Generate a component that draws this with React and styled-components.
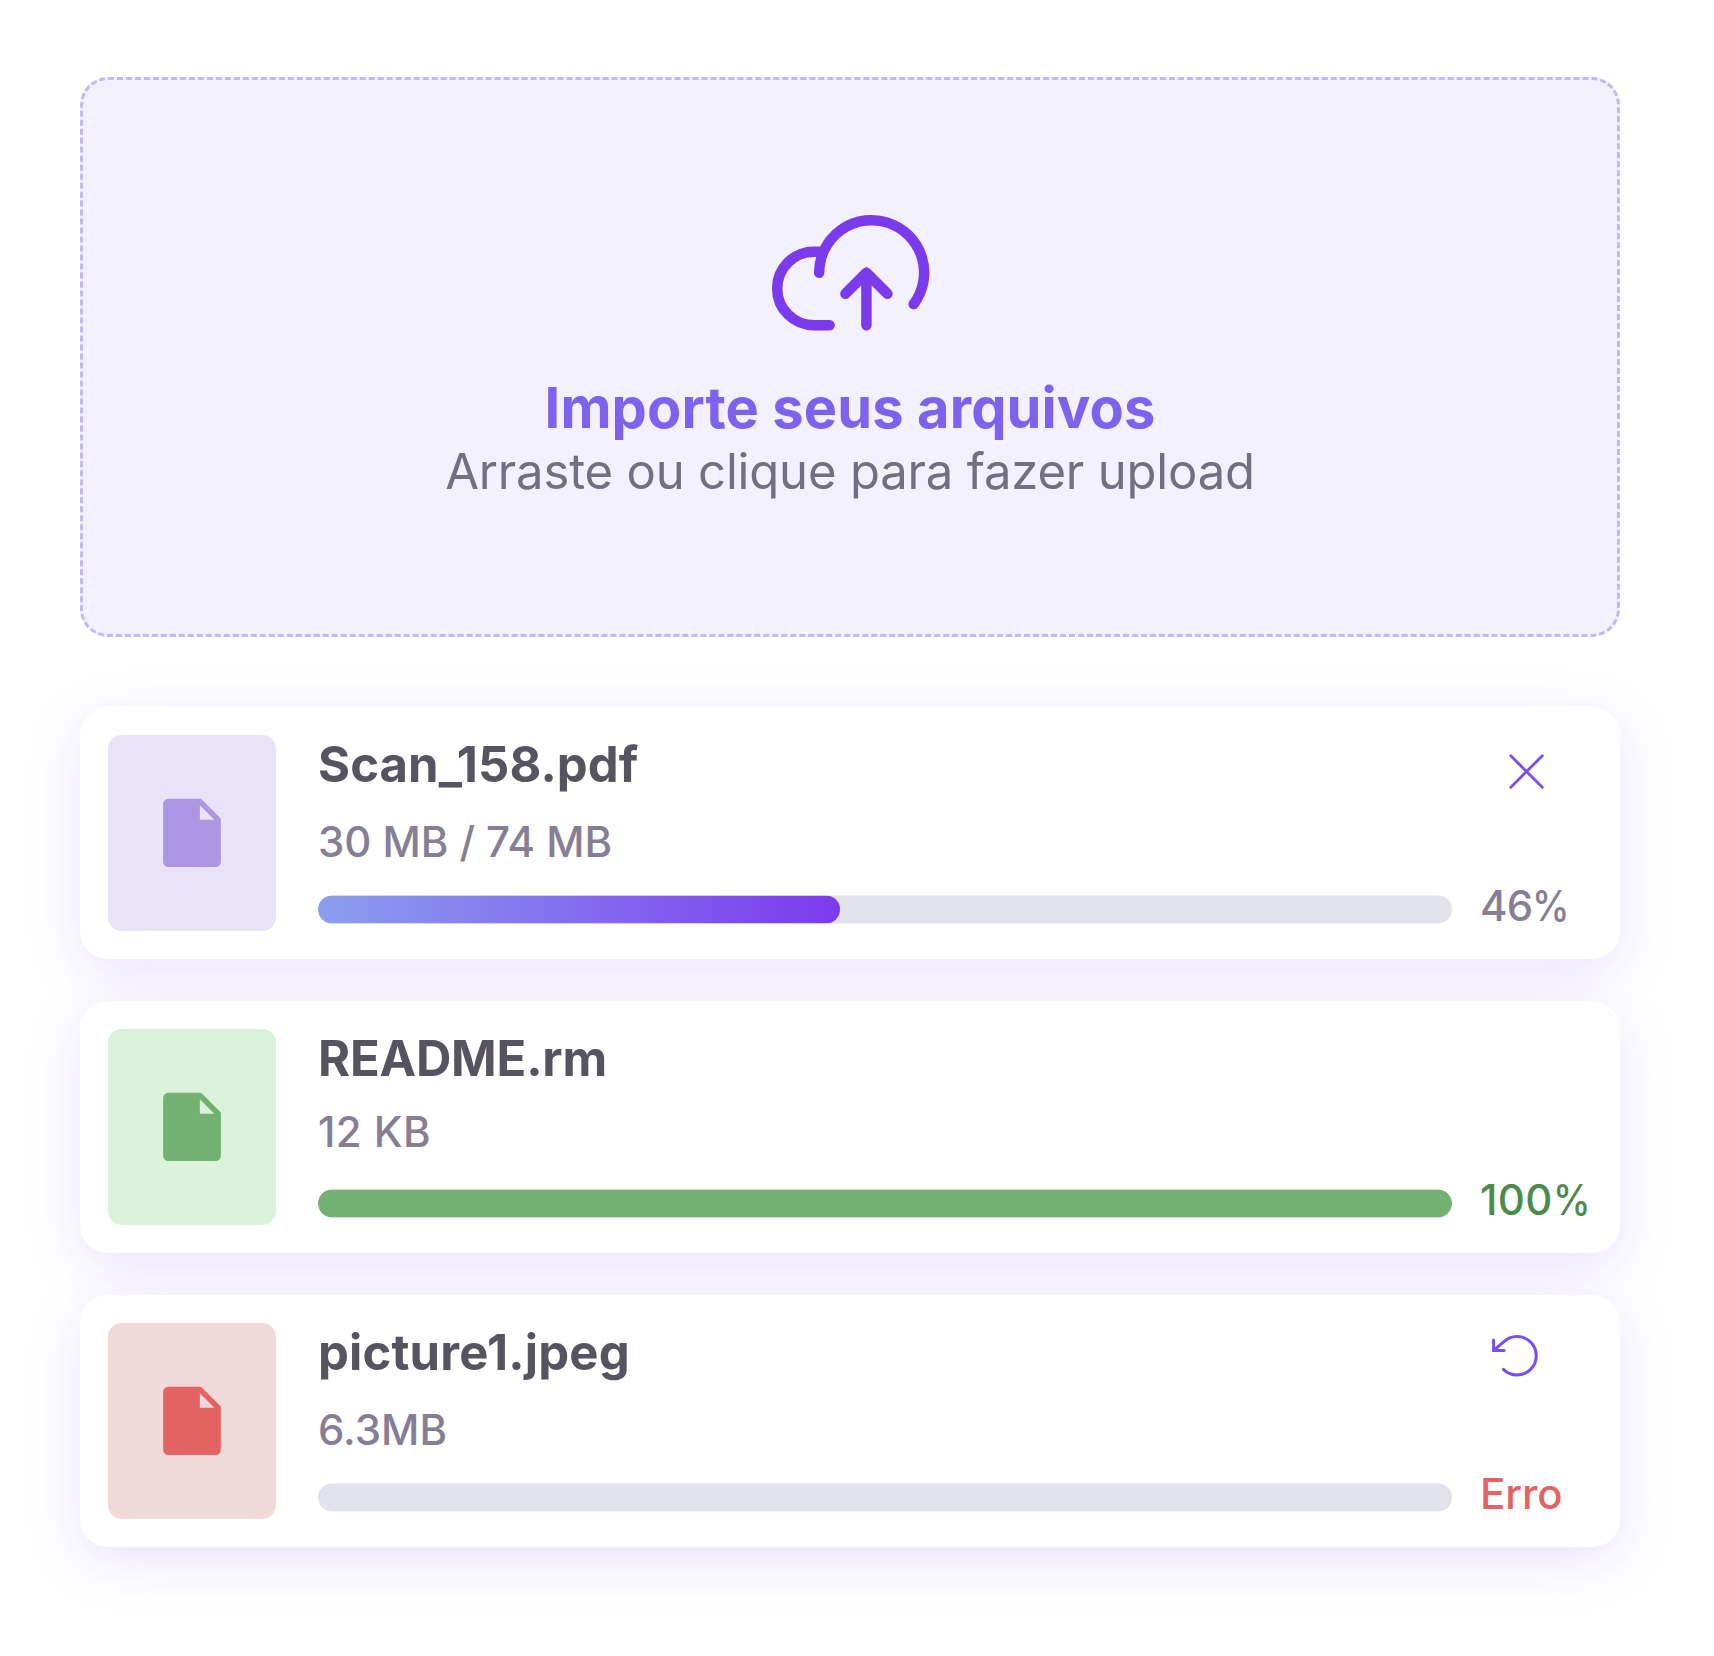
import React from "react";
import styled, { createGlobalStyle } from "styled-components";

const GlobalStyle = createGlobalStyle`
  *, *::before, *::after { box-sizing: border-box; }
  body { margin: 0; background: #ffffff; font-family: Inter, "Liberation Sans", sans-serif; }
  svg { display: block; flex-shrink: 0; }
`;

const Page = styled.main`
  width: 1714px;
  height: 1656px;
  padding: 77px 94px 0 80px;
  display: flex;
  flex-direction: column;
  gap: 70px;
`;

const DropZone = styled.section`
  height: 560px;
  padding-top: 109px;
  display: flex;
  flex-direction: column;
  align-items: center;
  border: 3px dashed #c4b5fd;
  border-radius: 28px;
  background: #f3f0ff;
`;

const DropTitle = styled.h1`
  margin: 17px 0 0;
  font-size: 56px;
  line-height: 68px;
  font-weight: 700;
  letter-spacing: 0.1px;
  color: #7c62ee;
`;

const DropHint = styled.p`
  margin: 0;
  font-size: 49px;
  line-height: 59px;
  font-weight: 400;
  letter-spacing: -0.18px;
  color: #746e82;
`;

const FileList = styled.ul`
  margin: 0;
  padding: 0;
  list-style: none;
  display: flex;
  flex-direction: column;
  gap: 42px;
`;

const Card = styled.li`
  height: 252px;
  padding: 28px;
  display: flex;
  gap: 42px;
  border-radius: 28px;
  background: #ffffff;
  box-shadow: 0 14px 56px rgba(108, 50, 240, 0.14);
`;

const Thumb = styled.div`
  width: 168px;
  height: 196px;
  flex-shrink: 0;
  display: flex;
  align-items: center;
  justify-content: center;
  border-radius: 14px;
  background: ${(p) => p.$bg};
  color: ${(p) => p.$fg};
`;

const Body = styled.div`
  flex: 1;
  min-width: 0;
  display: flex;
  flex-direction: column;
`;

const Header = styled.div`
  display: flex;
  justify-content: space-between;
  align-items: flex-start;
  margin-bottom: 18px;
`;

const FileName = styled.h2`
  margin: 0;
  font-size: 49px;
  line-height: 59px;
  font-weight: 700;
  letter-spacing: ${(p) => p.$tracking}px;
  color: #575361;
`;

const Action = styled.button`
  width: 56px;
  height: 63px;
  margin-right: ${(p) => p.$inset}px;
  padding: ${(p) => p.$drop}px 0 0;
  display: flex;
  align-items: flex-start;
  border: 0;
  background: none;
  color: #794ff0;
`;

const FileSize = styled.p`
  margin: 0;
  font-size: 42px;
  line-height: 51px;
  font-weight: 450;
  letter-spacing: ${(p) => p.$tracking}px;
  color: #857e95;
`;

const Progress = styled.div`
  height: 51px;
  margin-top: auto;
  display: flex;
  align-items: flex-end;
  gap: 28px;
`;

const Track = styled.div`
  width: 1134px;
  height: 28px;
  flex-shrink: 0;
  margin-bottom: 8px;
  border-radius: 14px;
  background: #e2e2ec;
  overflow: hidden;
  transform: translateY(0.5px);
`;

const Fill = styled.div`
  height: 100%;
  border-radius: 14px;
  background: ${(p) => p.$paint};
`;

const Status = styled.span`
  font-size: 42px;
  line-height: 51px;
  font-weight: 450;
  letter-spacing: ${(p) => p.$tracking}px;
  white-space: nowrap;
  color: ${(p) => p.$color};
`;

const PercentSign = styled.span`
  display: inline-block;
  transform: scaleX(0.9);
  transform-origin: left;
`;

const CloudIcon = () => (
  <svg width="168" height="168" viewBox="-1 0.5 256 256" fill="none" stroke="#7c3aed" strokeWidth="16" strokeLinecap="round" strokeLinejoin="round">
    <path d="M96 208H72A56 56 0 0 1 72 96H82" />
    <path d="M80 128a80 80 0 1 1 144 48" />
    <path d="M120 160l32-32 32 32M152 208v-80" />
  </svg>
);

const FileIcon = () => (
  <svg width="84" height="84" viewBox="0 0.5 256 256" fill="currentColor">
    <path d="M213.7 82.3l-56-56A8.1 8.1 0 0 0 152 24H56A16 16 0 0 0 40 40V216a16 16 0 0 0 16 16H200a16 16 0 0 0 16-16V88A8.1 8.1 0 0 0 213.7 82.3ZM152 88V44l44 44Z" />
  </svg>
);

const CloseIcon = () => (
  <svg width="56" height="56" viewBox="-2.5 -2.5 256 256" fill="none" stroke="currentColor" strokeWidth="13" strokeLinecap="round">
    <path d="M200 56L56 200M200 200L56 56" />
  </svg>
);

const RetryIcon = () => (
  <svg width="56" height="56" viewBox="1 -3.5 256 256" fill="none" stroke="currentColor" strokeWidth="14" strokeLinecap="round" strokeLinejoin="round">
    <path d="M70 104H22V56" />
    <path d="M66.8 190.2a88 88 0 1 0 0-124.4L22 104" />
  </svg>
);

const files = [
  {
    name: "Scan_158.pdf",
    nameTracking: 0.09,
    size: "30 MB / 74 MB",
    sizeTracking: -0.05,
    status: "46",
    isPercent: true,
    statusTracking: -0.8,
    percent: 46,
    thumb: "#e8e3f7",
    icon: "#ac96e4",
    paint: "linear-gradient(90deg, #8b9fee, #7c3aed)",
    statusColor: "#857e95",
    action: { label: "Cancelar", Icon: CloseIcon, inset: 38, drop: 8 },
  },
  {
    name: "README.rm",
    nameTracking: -0.2,
    size: "12 KB",
    sizeTracking: 0.4,
    status: "100",
    isPercent: true,
    statusTracking: 0.3,
    percent: 100,
    thumb: "#daf2da",
    icon: "#73b172",
    paint: "#73b172",
    statusColor: "#4c8b4b",
  },
  {
    name: "picture1.jpeg",
    nameTracking: 0.17,
    size: "6.3MB",
    sizeTracking: 0,
    status: "Erro",
    statusTracking: -0.1,
    percent: 0,
    thumb: "#f2d9d9",
    icon: "#e36363",
    paint: "none",
    statusColor: "#e36363",
    action: { label: "Tentar novamente", Icon: RetryIcon, inset: 47.5, drop: 4 },
  },
];

const FileCard = ({ file }) => (
  <Card>
    <Thumb $bg={file.thumb} $fg={file.icon}>
      <FileIcon />
    </Thumb>
    <Body>
      <Header>
        <FileName $tracking={file.nameTracking}>{file.name}</FileName>
        {file.action && (
          <Action aria-label={file.action.label} $inset={file.action.inset} $drop={file.action.drop}>
            <file.action.Icon />
          </Action>
        )}
      </Header>
      <FileSize $tracking={file.sizeTracking}>{file.size}</FileSize>
      <Progress>
        <Track>
          <Fill $paint={file.paint} style={{ width: `${file.percent}%` }} />
        </Track>
        <Status $color={file.statusColor} $tracking={file.statusTracking}>
          {file.status}
          {file.isPercent && <PercentSign>%</PercentSign>}
        </Status>
      </Progress>
    </Body>
  </Card>
);

export default function App() {
  return (
    <>
      <GlobalStyle />
      <Page>
        <DropZone>
          <CloudIcon />
          <DropTitle>Importe seus arquivos</DropTitle>
          <DropHint>Arraste ou clique para fazer upload</DropHint>
        </DropZone>
        <FileList>
          {files.map((file) => (
            <FileCard key={file.name} file={file} />
          ))}
        </FileList>
      </Page>
    </>
  );
}
